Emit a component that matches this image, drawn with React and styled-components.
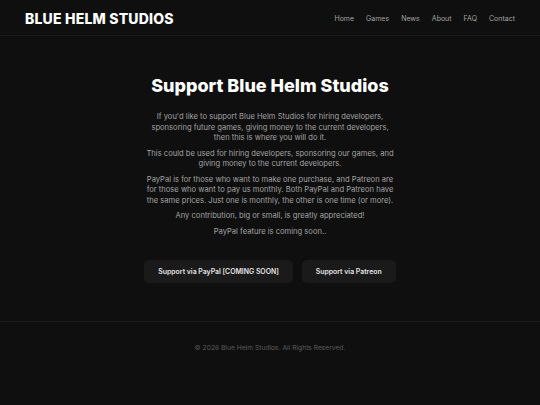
import styled, { createGlobalStyle } from "styled-components";

const GlobalStyle = createGlobalStyle`
  html, body {
    margin: 0;
    padding: 0;
    background: #0f0f0f;
  }
  body {
    font-family: Inter, "Noto Sans", sans-serif;
    color: #e5e5e5;
  }
`;

const Page = styled.div`
  min-height: 405px;
  display: flex;
  flex-direction: column;
  background: #0f0f0f;
`;

const Header = styled.header`
  height: 36px;
  box-sizing: border-box;
  display: flex;
  align-items: center;
  justify-content: space-between;
  padding: 1px 25px 0;
  border-bottom: 1px solid #1a1a1a;
`;

const Brand = styled.div`
  font-size: 14px;
  font-weight: 800;
  color: #ffffff;
  letter-spacing: 0.2px;
`;

const Nav = styled.nav`
  display: flex;
  gap: 12px;
`;

const NavLink = styled.a`
  font-size: 7px;
  color: #a3a3a3;
  text-decoration: none;
  cursor: pointer;
`;

const Main = styled.main`
  display: flex;
  flex-direction: column;
  align-items: center;
  padding-top: 39px;
  padding-bottom: 38px;
  border-bottom: 1px solid #1a1a1a;
`;

const Title = styled.h1`
  margin: 0 0 16px;
  font-size: 18px;
  font-weight: 800;
  color: #ffffff;
`;

const Text = styled.p`
  margin: 0 0 5px;
  max-width: 252px;
  font-size: 7.6px;
  line-height: 10.5px;
  color: #a3a3a3;
  text-align: center;
`;

const Buttons = styled.div`
  display: flex;
  gap: 9px;
  margin-top: 18px;
`;

const Button = styled.button`
  height: 23px;
  padding: 0 14px;
  border: none;
  border-radius: 5px;
  background: #1a1a1a;
  color: #e5e5e5;
  font-family: Inter, "Noto Sans", sans-serif;
  font-size: 6.9px;
  font-weight: 600;
  cursor: pointer;
`;

const Footer = styled.footer`
  padding-top: 22px;
  text-align: center;
  font-size: 6.7px;
  color: #5c5c5c;
`;

export default function App() {
  return (
    <Page>
      <GlobalStyle />
      <Header>
        <Brand>BLUE HELM STUDIOS</Brand>
        <Nav>
          {["Home", "Games", "News", "About", "FAQ", "Contact"].map((l) => (
            <NavLink key={l}>{l}</NavLink>
          ))}
        </Nav>
      </Header>
      <Main>
        <Title>Support Blue Helm Studios</Title>
        <Text>
          If you'd like to support Blue Helm Studios for hiring developers,
          sponsoring future games, giving money to the current developers,
          then this is where you will do it.
        </Text>
        <Text>
          This could be used for hiring developers, sponsoring our games, and
          giving money to the current developers.
        </Text>
        <Text>
          PayPal is for those who want to make one purchase, and Patreon are
          for those who want to pay us monthly. Both PayPal and Patreon have
          the same prices. Just one is monthly, the other is one time (or more).
        </Text>
        <Text>Any contribution, big or small, is greatly appreciated!</Text>
        <Text>PayPal feature is coming soon..</Text>
        <Buttons>
          <Button>Support via PayPal [COMING SOON]</Button>
          <Button>Support via Patreon</Button>
        </Buttons>
      </Main>
      <Footer>© 2026 Blue Helm Studios. All Rights Reserved.</Footer>
    </Page>
  );
}
